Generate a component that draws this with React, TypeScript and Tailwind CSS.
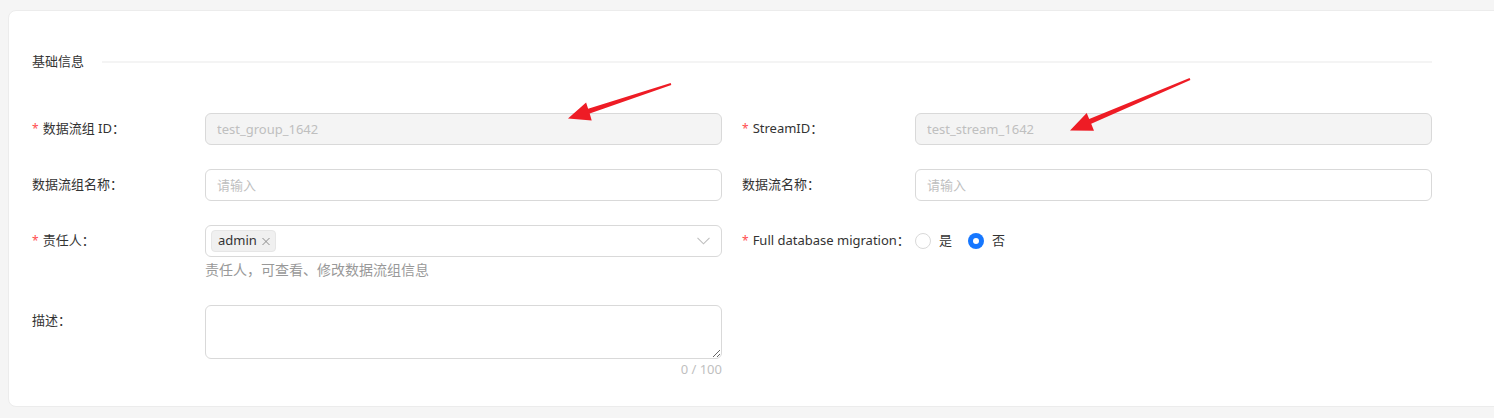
import React from 'react';

const font = { fontFamily: '"Noto Sans", "Noto Sans CJK SC", sans-serif' };

function Label({ text, required }: { text: string; required?: boolean }) {
  return (
    <div className="w-[173px] shrink-0 h-8 flex items-center text-[13px] text-[#333]">
      {required && <span className="text-[#ff4d4f] mr-1 text-[12px] leading-none">*</span>}
      <span>{text}：</span>
    </div>
  );
}

function TextInput({ value, placeholder, disabled }: { value?: string; placeholder?: string; disabled?: boolean }) {
  return (
    <input
      readOnly
      disabled={disabled}
      value={value ?? ''}
      placeholder={placeholder}
      className={`w-full h-8 px-[11px] rounded-md border border-[#d9d9d9] text-[13px] outline-none placeholder:text-[#bfbfbf] ${
        disabled ? 'bg-[#f4f4f4] text-[#bfbfbf]' : 'bg-white text-[#333]'
      }`}
    />
  );
}

function Radio({ label, checked }: { label: string; checked?: boolean }) {
  return (
    <label className="flex items-center mr-2">
      {checked ? (
        <span className="w-4 h-4 rounded-full bg-[#1677ff] flex items-center justify-center">
          <span className="w-[6px] h-[6px] rounded-full bg-white" />
        </span>
      ) : (
        <span className="w-4 h-4 rounded-full border border-[#d9d9d9] bg-white" />
      )}
      <span className="px-2 text-[13px] text-[#333]">{label}</span>
    </label>
  );
}

export default function App() {
  return (
    <div className="relative w-[1494px] h-[418px] overflow-hidden bg-[#f5f5f5] pt-[10px] pl-2" style={font}>
      <div className="w-[1500px] h-[397px] bg-white rounded-lg border border-[#ececec] pl-[23px] pt-[41px]">
        {/* section title */}
        <div className="w-[1400px] flex items-center h-5">
          <span className="text-[13px] text-[#333]">基础信息</span>
          <div className="flex-1 ml-[18px] h-[2px] bg-[#f4f4f4]" />
        </div>

        <div className="w-[1400px] mt-[41px] grid grid-cols-2 gap-x-5 items-start">
          <div className="flex mb-6">
            <Label text="数据流组 ID" required />
            <TextInput value="test_group_1642" disabled />
          </div>
          <div className="flex mb-6">
            <Label text="StreamID" required />
            <TextInput value="test_stream_1642" disabled />
          </div>

          <div className="flex mb-6">
            <Label text="数据流组名称" />
            <TextInput placeholder="请输入" />
          </div>
          <div className="flex mb-6">
            <Label text="数据流名称" />
            <TextInput placeholder="请输入" />
          </div>

          <div className="flex mb-6">
            <Label text="责任人" required />
            <div className="flex-1">
              <div className="h-8 rounded-md border border-[#d9d9d9] bg-white flex items-center pl-[5px] pr-[11px]">
                <span className="h-[22px] flex items-center rounded-[4px] bg-[#f0f0f0] border border-[#e6e6e6] pl-[6px] pr-1 text-[13px] text-[#333]">
                  admin
                  <svg width="10" height="10" viewBox="0 0 10 10" className="ml-1" fill="none" stroke="#8c8c8c" strokeWidth="1">
                    <path d="M1.5 2 L8.5 9 M8.5 2 L1.5 9" />
                  </svg>
                </span>
                <div className="flex-1" />
                <svg width="13" height="8" viewBox="0 0 13 8" fill="none" stroke="#bfbfbf" strokeWidth="1.1">
                  <path d="M0.5 0.8 L6.5 6.8 L12.5 0.8" />
                </svg>
              </div>
              <div className="h-6 flex items-center text-[14px] text-[#999]">责任人，可查看、修改数据流组信息</div>
            </div>
          </div>
          <div className="flex mb-6">
            <Label text="Full database migration" required />
            <div className="h-8 flex items-center">
              <Radio label="是" />
              <Radio label="否" checked />
            </div>
          </div>

          <div className="flex">
            <Label text="描述" />
            <div className="flex-1">
              <textarea
                readOnly
                className="block w-full h-[54px] rounded-md border border-[#d9d9d9] bg-white px-[11px] py-1 text-[13px] outline-none resize-y"
              />
              <div className="h-[22px] flex items-center justify-end text-[13px] text-[#bfbfbf]">0 / 100</div>
            </div>
          </div>
          <div />
        </div>
      </div>

      {/* red annotation arrows */}
      <svg className="absolute inset-0 pointer-events-none" width="1494" height="418" viewBox="0 0 1494 418">
        <polygon
          fill="#ee1c25"
          points="670.7,83 588.1,108.7 586.1,102.6 568,118.5 591.7,120.6 589.7,113.5 671.3,85"
        />
        <polygon
          fill="#ee1c25"
          points="1189.6,78 1089.2,119.1 1086.7,113.1 1070,130.5 1094,130.7 1091.2,123.7 1190.4,80"
        />
      </svg>
    </div>
  );
}
